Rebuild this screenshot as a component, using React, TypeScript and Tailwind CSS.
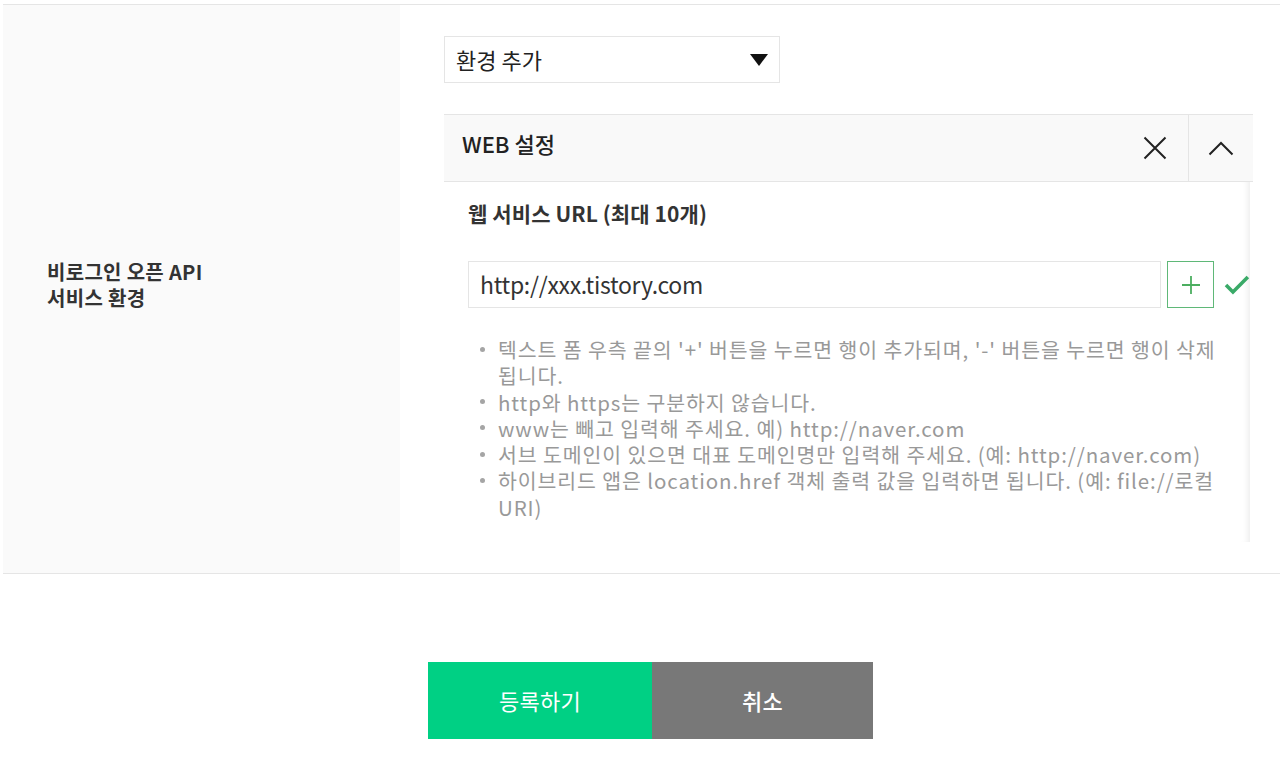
const font = "font-['Noto_Sans_CJK_KR','Noto_Sans',sans-serif]";

const notes = [
  "텍스트 폼 우측 끝의 '+' 버튼을 누르면 행이 추가되며, '-' 버튼을 누르면 행이 삭제 됩니다.",
  "http와 https는 구분하지 않습니다.",
  "www는 빼고 입력해 주세요. 예) http://naver.com",
  "서브 도메인이 있으면 대표 도메인명만 입력해 주세요. (예: http://naver.com)",
  "하이브리드 앱은 location.href 객체 출력 값을 입력하면 됩니다. (예: file://로컬 URI)",
];

function App() {
  return (
    <div className={`min-h-screen bg-white pt-1 ${font}`}>
      <div className="ml-[3px] flex border-y border-[#e5e5e5]">
        <div className="flex w-[397px] shrink-0 items-center bg-[#fafafa] pb-[8px] pl-[44px]">
          <div className="text-[20px] leading-[26px] font-bold tracking-[0.3px] text-[#333]">
            비로그인 오픈 API
            <br />
            서비스 환경
          </div>
        </div>

        <div className="min-w-0 flex-1 pt-[31px] pr-[27px] pb-[31px] pl-[44px]">
          <div className="flex h-[47px] w-[336px] items-center justify-between border border-[#e5e5e5] bg-white pr-[10px] pl-[11px]">
            <span className="text-[22px] text-[#222]">환경 추가</span>
            <svg width="20" height="14" viewBox="0 0 20 14">
              <polygon points="1,1 19,1 10,13" fill="#111" />
            </svg>
          </div>

          <div className="mt-[31px] flex h-[68px] border-y border-[#e5e5e5] bg-[#f9f9f9]">
            <div className="flex flex-1 items-center pb-[10px] pl-[18px] text-[22px] font-medium text-[#222]">
              WEB 설정
            </div>
            <button className="flex w-[66px] items-center justify-center">
              <svg width="24" height="24" viewBox="0 0 24 24" fill="none" stroke="#222" strokeWidth="2">
                <path d="M1.5 1.5 22.5 22.5M22.5 1.5 1.5 22.5" />
              </svg>
            </button>
            <button className="flex w-[65px] items-center justify-center border-l border-[#e5e5e5]">
              <svg width="26" height="16" viewBox="0 0 26 16" fill="none" stroke="#222" strokeWidth="2">
                <path d="M1.5 14.5 13 3 24.5 14.5" />
              </svg>
            </button>
          </div>

          <div className="mr-[3px] bg-white pt-[16px] pl-[24px] shadow-[inset_-7px_0_6px_-5px_rgba(0,0,0,0.08)]">
            <div className="text-[21px] leading-[30px] font-bold tracking-[0.1px] text-[#333]">
              웹 서비스 URL (최대 10개)
            </div>

            <div className="mt-[33px] flex items-center">
              <div className="flex h-[47px] w-[697px] items-center border border-[#e5e5e5] pl-[11px] text-[23px] tracking-[-0.3px] text-[#333]">
                http://xxx.tistory.com
              </div>
              <button className="ml-[6px] flex h-[47px] w-[47px] items-center justify-center border border-[#5fb878]">
                <svg width="20" height="20" viewBox="0 0 20 20" fill="none" stroke="#4cae60" strokeWidth="1.8">
                  <path d="M10 1v18M1 10h18" />
                </svg>
              </button>
              <svg width="26" height="20" viewBox="0 0 26 20" fill="none" stroke="#3aaa68" strokeWidth="3.6" className="ml-[10px]">
                <path d="M2 10l7 7L24 2" />
              </svg>
            </div>

            <ul className="mt-[28px] pr-[24px] pb-[22px] text-[20.5px] leading-[26.3px] tracking-[0.9px] break-keep text-[#999]">
              {notes.map((n) => (
                <li key={n} className="flex">
                  <span className="flex h-[26px] w-[30px] shrink-0 items-center pl-[12px]">
                    <span className="h-[5px] w-[5px] rounded-full bg-[#a5a5a5]" />
                  </span>
                  <span>{n}</span>
                </li>
              ))}
            </ul>
          </div>
        </div>
      </div>

      <div className="mt-[88px] flex pl-[428px]">
        <button className="h-[77px] w-[224px] bg-[#00d084] text-[22px] tracking-[0.3px] text-white">
          등록하기
        </button>
        <button className="h-[77px] w-[221px] bg-[#787878] text-[22px] font-medium tracking-[0.3px] text-white">
          취소
        </button>
      </div>
    </div>
  );
}

export default App;
